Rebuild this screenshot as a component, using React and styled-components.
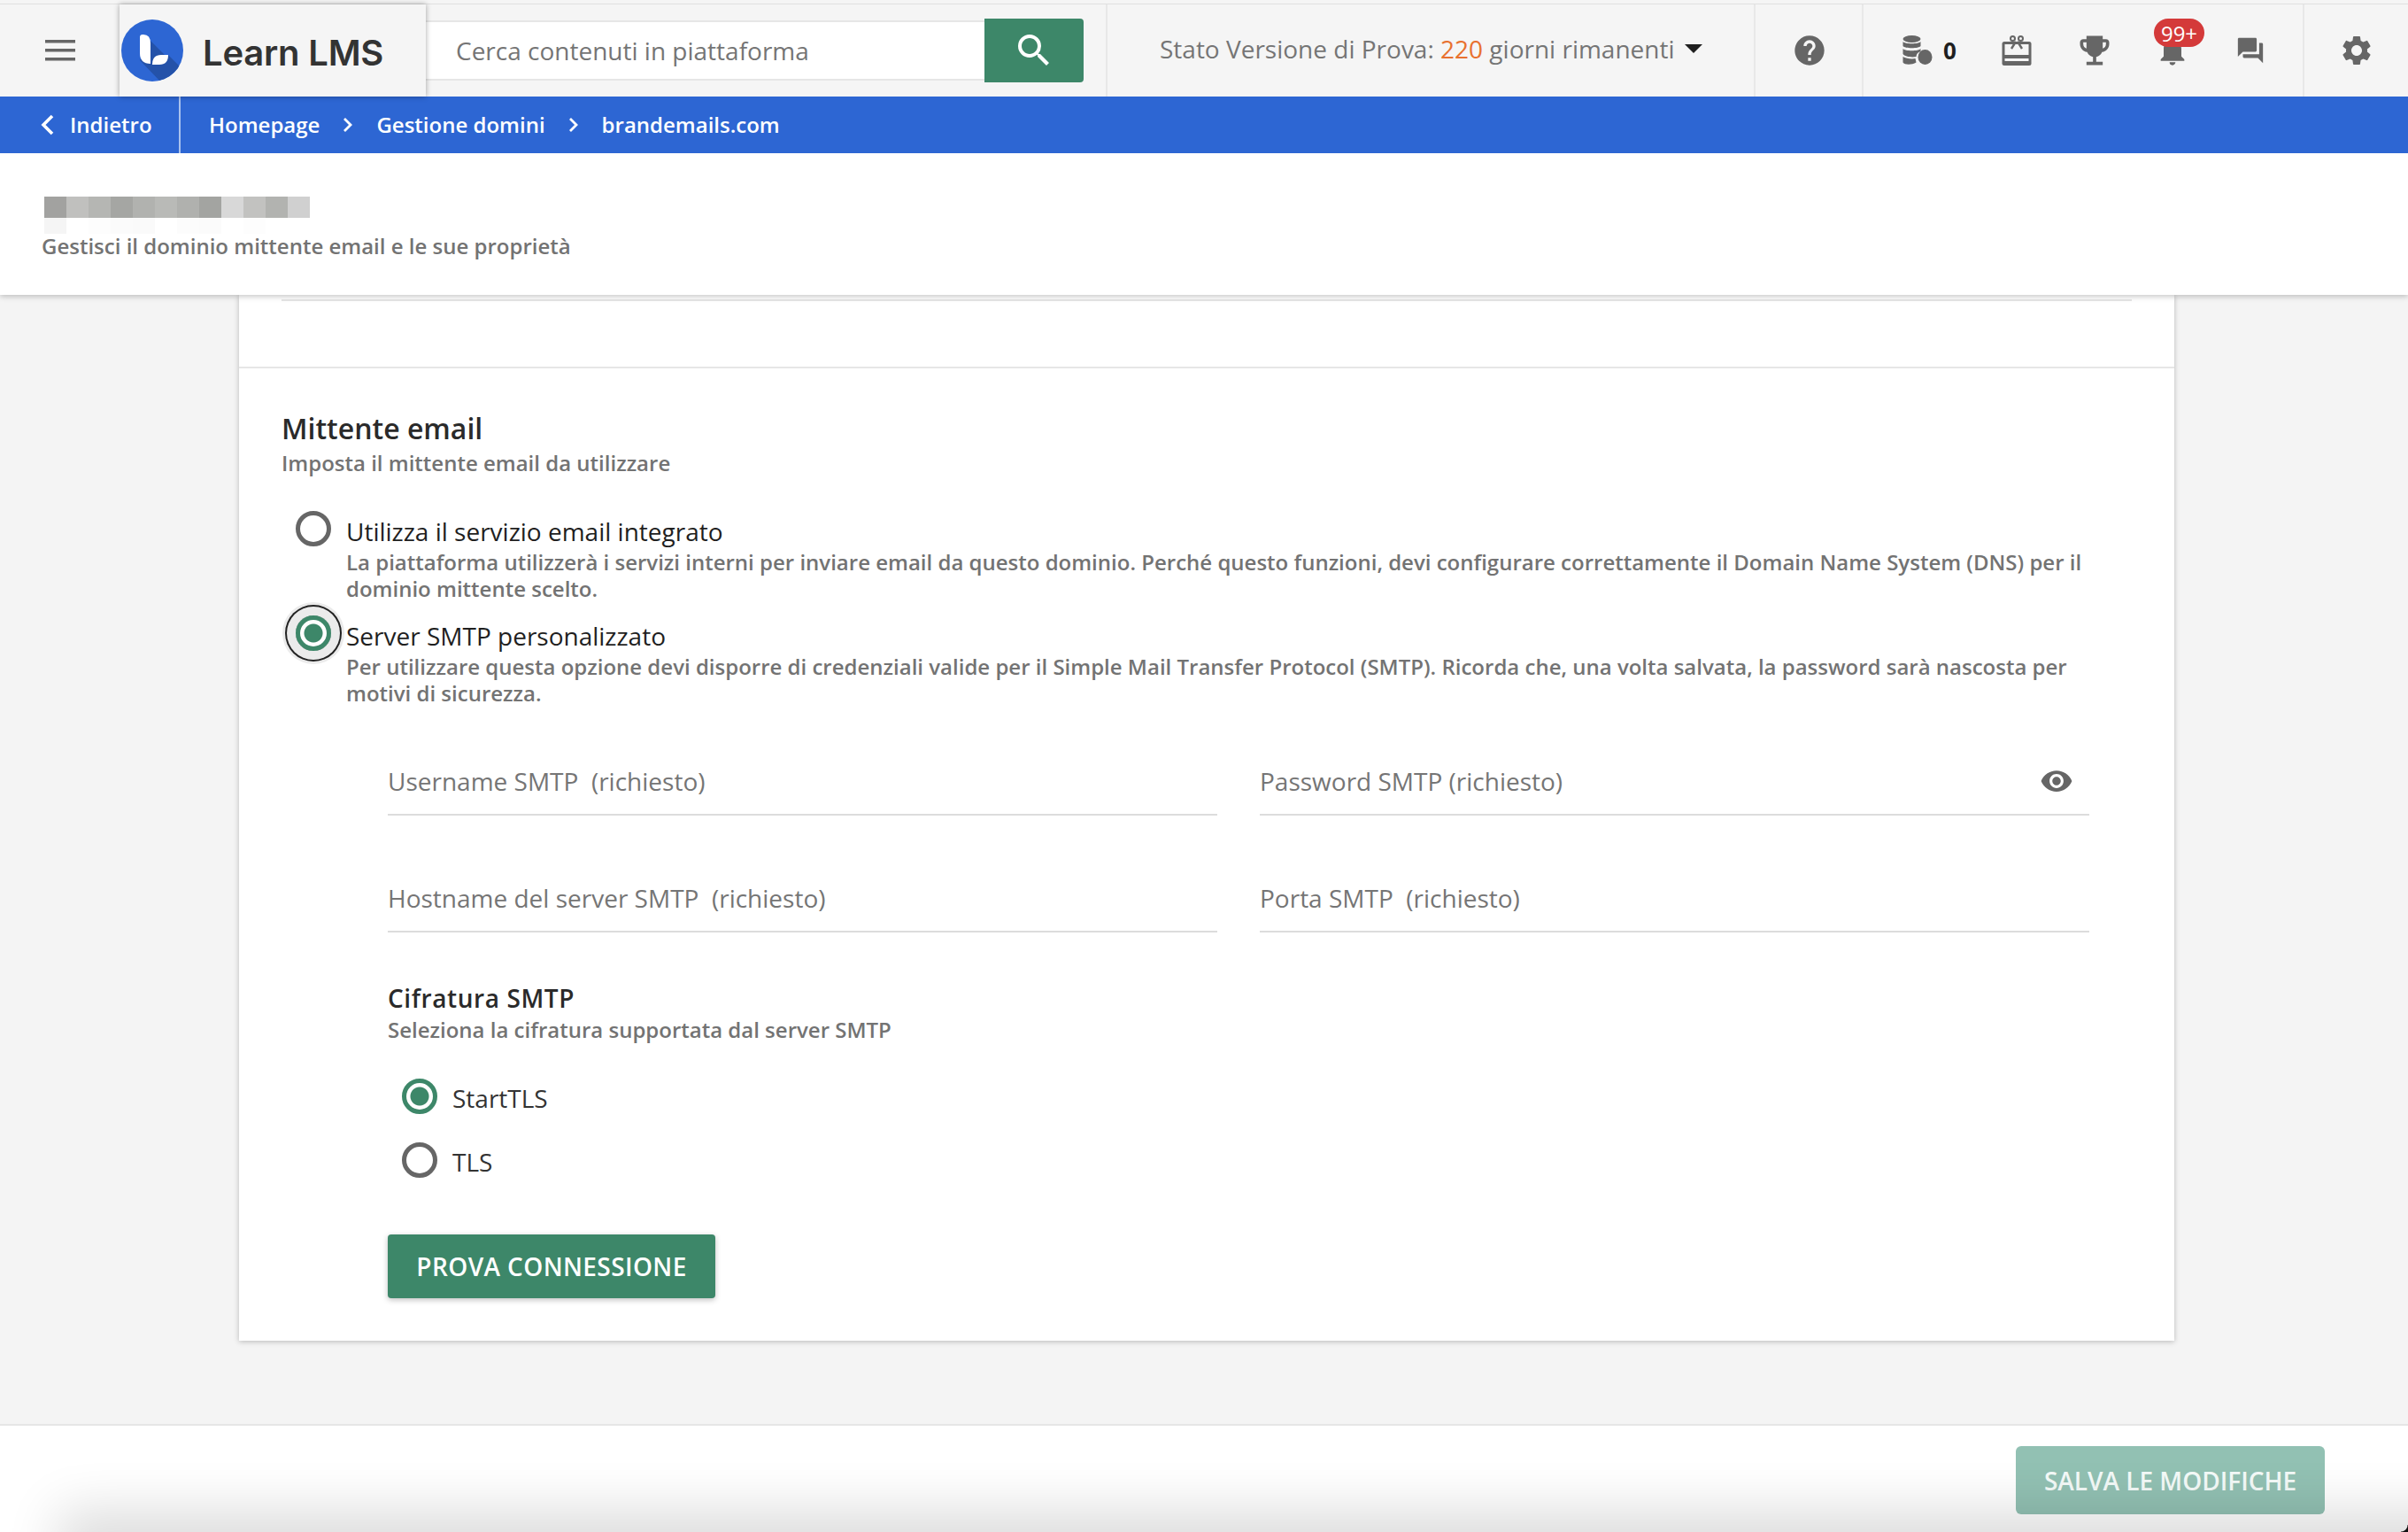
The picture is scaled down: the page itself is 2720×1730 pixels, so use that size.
import React from "react";
import styled, { createGlobalStyle } from "styled-components";
import {
    MdHelp,
    MdEmojiEvents,
    MdNotifications,
    MdQuestionAnswer,
    MdSettings,
    MdSearch,
    MdVisibility,
} from "react-icons/md";

const GlobalStyle = createGlobalStyle`
    html, body {
        margin: 0;
        padding: 0;
        height: 100%;
        background: #f4f4f4;
        font-family: "Open Sans", "Liberation Sans", sans-serif;
    }
    * {
        box-sizing: border-box;
    }
`;

const mosaicTop = ["#a2a2a0", "#c0c0be", "#b5b6b3", "#a5a6a3", "#b1b2af", "#b9bab7", "#b0b1ae", "#a3a4a1", "#d8d8d8", "#c2c2c0", "#b2b3b0", "#d0d0d0"];
const mosaicBottom = ["#f5f5f5", "#ffffff", "#fdfdfd", "#fbfbfb", "#fafafa", "#ffffff", "#fcfcfc", "#fbfbfb", "#ffffff", "#fdfdfd", "#ffffff", "#ffffff"];

const Logo = () => (
    <svg width="70" height="70" viewBox="0 0 70 70">
        <defs>
            <clipPath id="logoClip">
                <circle cx="35" cy="35" r="35" />
            </clipPath>
        </defs>
        <circle cx="35" cy="35" r="35" fill="#2d66d3" />
        <polygon points="33,24 50,41 53,40 72,59 72,72 46,72 21,46" fill="#2452a9" clipPath="url(#logoClip)" />
        <path d="M21 20q0-3 3-3h1q8 0 8 10v23q-12 0-12-12z" fill="#fff" />
        <path d="M35 51q0-11 10-11h8q0 11-10 11z" fill="#fff" />
    </svg>
);

const MenuIcon = () => (
    <svg width="34" height="24" viewBox="0 0 34 24" fill="#666">
        <rect y="0" width="34" height="3.5" />
        <rect y="10" width="34" height="3.5" />
        <rect y="20" width="34" height="3.5" />
    </svg>
);

const CoinsIcon = () => (
    <svg width="34" height="34" viewBox="0 0 34 34" fill="#666">
        <ellipse cx="10.5" cy="4" rx="10" ry="4" />
        <path d="M.5 7c2 3 18 3 20 0v5c-2 3-18 3-20 0z" />
        <path d="M.5 15c2 3 18 3 20 0v3c-3 1-5 3-5 6-5 1-13 0-15-3z" />
        <path d="M.5 24c3 2 10 3 14 2l1 4.500c-5 3-13 3-15 0z" />
        <ellipse cx="25.500" cy="24.500" rx="8" ry="8.500" />
    </svg>
);

const GiftIcon = () => (
    <svg width="34" height="34" viewBox="0 0 34 34">
        <rect x="0.500" y="7" width="33" height="27" rx="2.500" fill="#666" />
        <rect x="3.500" y="10" width="27" height="12" fill="#f5f5f5" />
        <rect x="3.500" y="26" width="27" height="3" fill="#f5f5f5" />
        <g fill="none" stroke="#666">
            <circle cx="12.500" cy="3.500" r="2.500" strokeWidth="2" />
            <circle cx="21.500" cy="3.500" r="2.500" strokeWidth="2" />
            <path d="M16 7l-5 8M18 7l5 8" strokeWidth="2.400" />
        </g>
    </svg>
);

const BackChevron = () => (
    <svg width="18" height="24" viewBox="0 0 18 24" fill="none" stroke="#fff" strokeWidth="3.600">
        <polyline points="15,2 5,12 15,22" />
    </svg>
);

const CrumbChevron = () => (
    <svg width="12" height="18" viewBox="0 0 12 18" fill="none" stroke="#fff" strokeWidth="2.800">
        <polyline points="2,2 9,9 2,16" />
    </svg>
);

const App = () => {
    return (
        <>
            <GlobalStyle />
            <Page>
                <TopBar>
                    <MenuButton>
                        <MenuIcon />
                    </MenuButton>
                    <LogoPanel>
                        <Logo />
                        <LogoText>Learn LMS</LogoText>
                    </LogoPanel>
                    <SearchBox>
                        <SearchField>Cerca contenuti in piattaforma</SearchField>
                        <SearchButton>
                            <MdSearch size={48} color="#fff" />
                        </SearchButton>
                    </SearchBox>
                    <TrialStatus>
                        Stato Versione di Prova:&nbsp;<TrialDays>220</TrialDays>&nbsp;giorni rimanenti
                        <Caret />
                    </TrialStatus>
                    <HelpSection>
                        <MdHelp size={40} color="#666" />
                    </HelpSection>
                    <IconsSection>
                        <Coins>
                            <CoinsIcon />
                            <CoinCount>0</CoinCount>
                        </Coins>
                        <NavIcon>
                            <GiftIcon />
                        </NavIcon>
                        <NavIcon>
                            <MdEmojiEvents size={44} color="#666" />
                        </NavIcon>
                        <NavIcon>
                            <MdNotifications size={40} color="#666" />
                            <Badge>99+</Badge>
                        </NavIcon>
                        <NavIcon>
                            <MdQuestionAnswer size={34} color="#666" />
                        </NavIcon>
                    </IconsSection>
                    <GearSection>
                        <MdSettings size={40} color="#666" />
                    </GearSection>
                </TopBar>

                <BlueBar>
                    <BackLink>
                        <BackChevron />
                        Indietro
                    </BackLink>
                    <Crumbs>
                        <span>Homepage</span>
                        <CrumbChevron />
                        <span>Gestione domini</span>
                        <CrumbChevron />
                        <span>brandemails.com</span>
                    </Crumbs>
                </BlueBar>

                <PageHeader>
                    <Mosaic>
                        {mosaicTop.map((c, i) => (
                            <MosaicCell key={i} $color={c} />
                        ))}
                        {mosaicBottom.map((c, i) => (
                            <MosaicCell key={i} $color={c} $low />
                        ))}
                    </Mosaic>
                    <PageSubtitle>Gestisci il dominio mittente email e le sue proprietà</PageSubtitle>
                </PageHeader>

                <Content>
                    <Card>
                        <CardTop>
                            <InnerLine />
                        </CardTop>
                        <Section>
                            <SectionTitle>Mittente email</SectionTitle>
                            <Hint>Imposta il mittente email da utilizzare</Hint>

                            <Options>
                                <Option>
                                    <Radio />
                                    <div>
                                        <OptionLabel>Utilizza il servizio email integrato</OptionLabel>
                                        <OptionDesc>
                                            La piattaforma utilizzerà i servizi interni per inviare email da questo dominio. Perché questo funzioni, devi configurare correttamente il Domain Name System (DNS) per il dominio mittente scelto.
                                        </OptionDesc>
                                    </div>
                                </Option>
                                <Option>
                                    <Radio $checked $focused />
                                    <div>
                                        <OptionLabel>Server SMTP personalizzato</OptionLabel>
                                        <OptionDesc>
                                            Per utilizzare questa opzione devi disporre di credenziali valide per il Simple Mail Transfer Protocol (SMTP). Ricorda che, una volta salvata, la password sarà nascosta per motivi di sicurezza.
                                        </OptionDesc>
                                    </div>
                                </Option>
                            </Options>

                            <Fields>
                                <Field>Username SMTP&nbsp; (richiesto)</Field>
                                <Field>
                                    Password SMTP (richiesto)
                                    <EyeWrap>
                                        <MdVisibility size={38} color="#666" />
                                    </EyeWrap>
                                </Field>
                                <Field>Hostname del server SMTP&nbsp; (richiesto)</Field>
                                <Field>Porta SMTP&nbsp; (richiesto)</Field>
                            </Fields>

                            <Encryption>
                                <SubTitle>Cifratura SMTP</SubTitle>
                                <Hint>Seleziona la cifratura supportata dal server SMTP</Hint>
                                <EncryptionList>
                                    <EncryptionRow>
                                        <Radio $checked />
                                        <EncryptionLabel>StartTLS</EncryptionLabel>
                                    </EncryptionRow>
                                    <EncryptionRow>
                                        <Radio />
                                        <EncryptionLabel>TLS</EncryptionLabel>
                                    </EncryptionRow>
                                </EncryptionList>
                                <TestButton>PROVA CONNESSIONE</TestButton>
                            </Encryption>
                        </Section>
                    </Card>
                </Content>

                <Footer>
                    <SaveButton>SALVA LE MODIFICHE</SaveButton>
                </Footer>
            </Page>
        </>
    );
};

const Page = styled.div`
    display: flex;
    flex-direction: column;
    height: 100vh;
    overflow: hidden;
    background: #f4f4f4;
`;

const TopBar = styled.header`
    display: flex;
    flex: 0 0 109px;
    padding-top: 5px;
    background: #f5f5f5;
    position: relative;
    z-index: 3;

    &::before {
        content: "";
        position: absolute;
        top: 4px;
        left: 0;
        right: 0;
        height: 1px;
        background: #e0e0e0;
    }
`;

const MenuButton = styled.div`
    flex: 0 0 135px;
    display: flex;
    align-items: center;
    justify-content: center;
`;

const LogoPanel = styled.div`
    flex: 0 0 346px;
    display: flex;
    align-items: center;
    gap: 22px;
    padding-left: 2px;
    background: #f5f5f5;
    box-shadow: 0 0 6px rgba(0, 0, 0, 0.35);
    position: relative;
    z-index: 2;
`;

const LogoText = styled.span`
    margin-top: 4px;
    font-family: "Inter", "Open Sans", sans-serif;
    font-size: 40px;
    font-weight: 600;
    color: #333;
    letter-spacing: -0.2px;
`;

const SearchBox = styled.div`
    flex: 0 0 743px;
    display: flex;
    height: 72px;
    margin: 16px 0 0 0;
`;

const SearchField = styled.div`
    flex: 1;
    display: flex;
    align-items: center;
    margin: 2px 0;
    padding-left: 34px;
    background: #fff;
    border-top: 2px solid #e6e6e6;
    border-bottom: 2px solid #e6e6e6;
    font-size: 28px;
    color: #757575;
`;

const SearchButton = styled.div`
    flex: 0 0 112px;
    display: flex;
    align-items: center;
    justify-content: center;
    background: #3d8769;
    border-radius: 0 4px 4px 0;
`;

const TrialStatus = styled.div`
    flex: 0 0 734px;
    margin-left: 25px;
    display: flex;
    align-items: center;
    padding: 0 0 5px 59px;
    border-left: 2px solid #e8e8e8;
    border-right: 2px solid #e8e8e8;
    font-size: 28px;
    color: #757575;
    white-space: nowrap;
`;

const TrialDays = styled.span`
    color: #e8712f;
`;

const Caret = styled.span`
    width: 0;
    height: 0;
    margin-left: 11px;
    border-left: 10px solid transparent;
    border-right: 10px solid transparent;
    border-top: 10px solid #1f1f1f;
`;

const HelpSection = styled.div`
    flex: 0 0 122px;
    display: flex;
    align-items: center;
    justify-content: center;
    padding-left: 2px;
    border-right: 2px solid #e8e8e8;
`;

const IconsSection = styled.div`
    flex: 0 0 498px;
    display: flex;
    align-items: center;
    padding-left: 44px;
    border-right: 2px solid #e8e8e8;
`;

const Coins = styled.div`
    flex: 0 0 85px;
    display: flex;
    align-items: center;
    gap: 12px;
`;

const CoinCount = styled.span`
    font-size: 26px;
    font-weight: 700;
    color: #1f1f1f;
`;

const NavIcon = styled.div`
    flex: 0 0 88px;
    display: flex;
    align-items: center;
    justify-content: center;
    position: relative;
`;

const Badge = styled.span`
    position: absolute;
    top: -16px;
    left: 23px;
    width: 57px;
    height: 32px;
    display: flex;
    align-items: center;
    justify-content: center;
    border-radius: 16px;
    background: #d43a3a;
    color: #fff;
    font-size: 24px;
`;

const GearSection = styled.div`
    flex: 1;
    display: flex;
    align-items: center;
    justify-content: center;
`;

const BlueBar = styled.nav`
    flex: 0 0 64px;
    display: flex;
    align-items: center;
    background: #2d66d3;
    color: #fff;
    font-size: 24px;
    font-weight: 600;
    position: relative;
    z-index: 2;
`;

const BackLink = styled.div`
    flex: 0 0 204px;
    height: 64px;
    display: flex;
    align-items: center;
    gap: 17px;
    padding: 0 0 1px 44px;
    border-right: 2px solid #a9c2ee;
`;

const Crumbs = styled.div`
    display: flex;
    align-items: center;
    gap: 26px;
    padding-left: 32px;
    margin-bottom: 1px;
`;

const PageHeader = styled.div`
    flex: 0 0 160px;
    padding: 49px 0 0 47px;
    background: #fff;
    box-shadow: 0 2px 6px rgba(0, 0, 0, 0.22);
    position: relative;
    z-index: 1;
`;

const Mosaic = styled.div`
    display: grid;
    grid-template-columns: repeat(12, 25px);
    margin-left: 3px;
`;

const MosaicCell = styled.div`
    height: ${(p) => (p.$low ? "18px" : "24px")};
    background: ${(p) => p.$color};
`;

const PageSubtitle = styled.div`
    margin-top: -1px;
    font-size: 24px;
    font-weight: 600;
    line-height: 30px;
    color: #737373;
`;

const Content = styled.main`
    flex: 1;
    padding: 0 264px 94px 270px;
    min-height: 0;
`;

const Card = styled.div`
    height: 100%;
    background: #fff;
    box-shadow: 0 1px 6px rgba(0, 0, 0, 0.25);
`;

const CardTop = styled.div`
    height: 83px;
    padding: 5px 48px 0;
    border-bottom: 2px solid #e6e6e6;
`;

const InnerLine = styled.div`
    height: 2px;
    background: #e6e6e6;
`;

const Section = styled.section`
    padding: 48px 48px 48px;
`;

const SectionTitle = styled.h2`
    margin: 0 0 4px;
    font-size: 32px;
    font-weight: 600;
    line-height: 40px;
    color: #2a2a2a;
`;

const Hint = styled.p`
    margin: 0;
    font-size: 24px;
    font-weight: 600;
    line-height: 30px;
    color: #737373;
`;

const Options = styled.div`
    display: flex;
    flex-direction: column;
    gap: 15px;
    margin-top: 39px;
`;

const Option = styled.div`
    display: grid;
    grid-template-columns: 40px 1fr;
    column-gap: 17px;
    padding-left: 16px;
`;

const Radio = styled.span`
    display: block;
    flex: none;
    width: 40px;
    height: 40px;
    border-radius: 50%;
    border: 5px solid ${(p) => (p.$checked ? "#3d8769" : "#666")};
    background: ${(p) => (p.$checked ? "radial-gradient(circle, #3d8769 0 10px, #fff 11px)" : "#fff")};
    box-shadow: ${(p) => (p.$focused ? "0 0 0 10px #ebebeb, 0 0 0 12px #222, 0 0 0 15px #ebebeb" : "none")};
`;

const OptionLabel = styled.div`
    margin-top: 5px;
    font-size: 28px;
    line-height: 36px;
    color: #1f1f1f;
`;

const OptionDesc = styled.div`
    margin-top: 2px;
    font-size: 24px;
    font-weight: 600;
    line-height: 30px;
    color: #737373;
`;

const Fields = styled.div`
    display: grid;
    grid-template-columns: 1fr 1fr;
    column-gap: 48px;
    row-gap: 61px;
    margin-top: 52px;
    padding: 0 48px 0 120px;
`;

const Field = styled.div`
    height: 71px;
    display: flex;
    align-items: center;
    justify-content: space-between;
    padding-bottom: 6px;
    border-bottom: 2px solid #dcdcdc;
    font-size: 28px;
    color: #757575;
`;

const EyeWrap = styled.span`
    display: flex;
    margin-right: 18px;
`;

const Encryption = styled.div`
    margin-top: 56px;
    padding-left: 120px;
`;

const SubTitle = styled.h3`
    margin: 0 0 3px;
    font-size: 28px;
    font-weight: 600;
    line-height: 36px;
    letter-spacing: 0.6px;
    color: #2a2a2a;
`;

const EncryptionList = styled.div`
    display: flex;
    flex-direction: column;
    gap: 32px;
    margin-top: 40px;
    padding-left: 16px;
`;

const EncryptionRow = styled.div`
    display: flex;
    align-items: center;
    gap: 17px;
    height: 40px;
`;

const EncryptionLabel = styled.span`
    margin-top: 4px;
    font-size: 28px;
    color: #333;
`;

const TestButton = styled.button`
    display: block;
    width: 370px;
    height: 72px;
    margin-top: 64px;
    border: none;
    border-radius: 4px;
    background: #3d8769;
    color: #fff;
    font-family: inherit;
    font-size: 28px;
    font-weight: 600;
    letter-spacing: 0.4px;
    box-shadow: 0 2px 6px rgba(0, 0, 0, 0.25);
`;

const Footer = styled.footer`
    flex: 0 0 122px;
    display: flex;
    justify-content: flex-end;
    padding: 23px 94px 0 0;
    background: #fff;
    border-top: 2px solid #e6e6e6;
    position: relative;
    overflow: hidden;

    &::after {
        content: "";
        position: absolute;
        left: 90px;
        right: -60px;
        bottom: -30px;
        height: 30px;
        box-shadow: 0 0 60px 24px rgba(0, 0, 0, 0.14);
    }

    &::before {
        content: "";
        position: absolute;
        right: 0;
        bottom: 0;
        width: 8px;
        height: 8px;
        background: radial-gradient(circle at 0 0, transparent 7px, #111 8px);
        z-index: 1;
    }
`;

const SaveButton = styled.button`
    width: 349px;
    height: 77px;
    border: none;
    border-radius: 6px;
    background: #92c1b3;
    color: #f4faf8;
    font-family: inherit;
    font-size: 28px;
    font-weight: 600;
`;

export default App;
